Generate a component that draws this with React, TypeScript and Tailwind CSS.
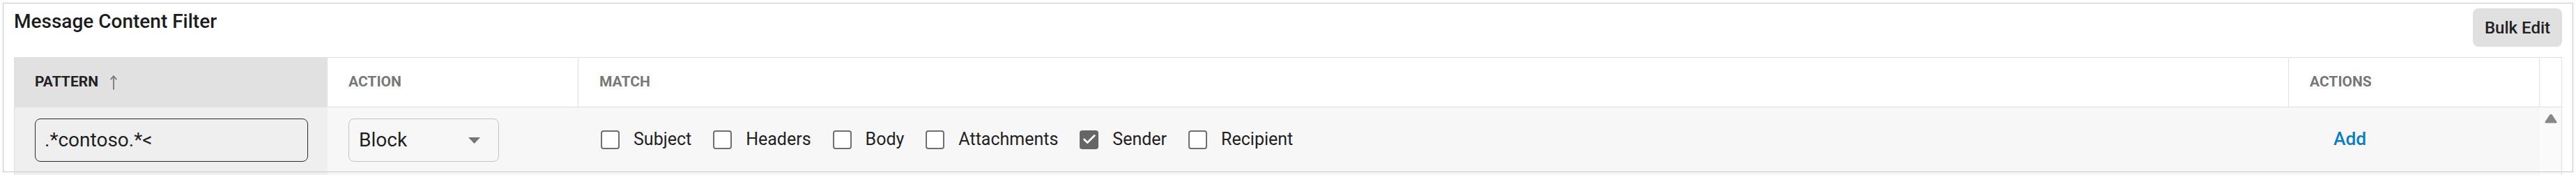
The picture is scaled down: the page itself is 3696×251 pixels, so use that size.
import { Check } from 'lucide-react';

const matchFields = [
  { label: 'Subject', checked: false },
  { label: 'Headers', checked: false },
  { label: 'Body', checked: false },
  { label: 'Attachments', checked: false },
  { label: 'Sender', checked: true },
  { label: 'Recipient', checked: false },
];

function SortArrow() {
  return (
    <svg width="10" height="22" viewBox="0 0 10 22" className="block">
      <path d="M5 21V2.5M1.2 6.6L5 2.2l3.8 4.4" fill="none" stroke="#7a7a7a" strokeWidth="1.8" strokeLinecap="round" strokeLinejoin="round" />
    </svg>
  );
}

function Box({ checked }: { checked: boolean }) {
  if (checked) {
    return (
      <span className="w-[27px] h-[27px] rounded-[4px] bg-[#666666] flex items-center justify-center shrink-0">
        <Check size={22} color="#ffffff" strokeWidth={3} />
      </span>
    );
  }
  return <span className="w-[27px] h-[27px] rounded-[4px] border-[2.5px] border-[#6f6f6f] bg-white shrink-0" />;
}

export default function App() {
  return (
    <div className="w-[3696px] h-[251px] bg-white overflow-hidden font-['Roboto',sans-serif]">
      <div className="mx-[5px] mt-[5px] h-[241px] outline-1 outline-[#c8c8c8] px-[15px] pt-[7px]">
        {/* Title + bulk edit */}
        <div className="flex items-start justify-between mb-[15px]">
          <h1 className="text-[28px] leading-[38px] font-medium text-[#1c1c1c]">Message Content Filter</h1>
          <button className="h-[55px] w-[128px] rounded-[8px] bg-[#e0e0e0] text-[24px] font-medium text-[#222222]">
            Bulk Edit
          </button>
        </div>

        {/* Table */}
        <div className="border border-[#e0e0e0] border-b-0">
          <div className="grid grid-cols-[449px_360px_1fr_360px_31px] h-[71px] border-b border-[#e0e0e0] text-[21px] font-bold">
            <div className="bg-[#e1e1e1] flex items-center gap-[17px] pl-[29px] text-[#222222]">
              PATTERN
              <SortArrow />
            </div>
            <div className="flex items-center pl-[30px] text-[#777777] border-r border-[#e0e0e0]">ACTION</div>
            <div className="flex items-center pl-[30px] text-[#777777] border-r border-[#e0e0e0]">MATCH</div>
            <div className="flex items-center pl-[30px] text-[#777777] border-r border-[#e0e0e0]">ACTIONS</div>
            <div />
          </div>

          <div className="grid grid-cols-[449px_360px_1fr_360px_31px] h-[97px]">
            <div className="bg-[#efefef] pl-[29px] pt-[16px]">
              <div className="w-[392px] h-[62px] rounded-[8px] border-[1.5px] border-[#2a2a2a] flex items-center pl-[13px] text-[28px] text-[#1f1f1f]">
                .*contoso.*&lt;
              </div>
            </div>
            <div className="bg-[#f7f7f7] pl-[30px] pt-[16px]">
              <div className="w-[216px] h-[62px] rounded-[8px] border border-[#c4c4c4] flex items-center justify-between pl-[14px] pr-[26px] text-[28px] text-[#1f1f1f]">
                Block
                <svg width="17" height="9" viewBox="0 0 17 9">
                  <path d="M0 0h17L8.5 9z" fill="#757575" />
                </svg>
              </div>
            </div>
            <div className="bg-[#f7f7f7] pl-[32px] pt-[15px]">
              <div className="h-[62px] flex items-center gap-[31px] text-[25px] text-[#222222]">
                {matchFields.map(f => (
                  <label key={f.label} className="flex items-center gap-[20px]">
                    <Box checked={f.checked} />
                    {f.label}
                  </label>
                ))}
              </div>
            </div>
            <div className="bg-[#f7f7f7] pl-[64px] pt-[15px]">
              <div className="h-[62px] flex items-center text-[26.4px] font-medium text-[#0b7dc3]">Add</div>
            </div>
            <div className="bg-[#fafafa] pt-[9px] pl-[7px]">
              <svg width="18" height="14" viewBox="0 0 18 14">
                <path d="M7.3 1.6a2 2 0 0 1 3.4 0l6.6 10a1.3 1.3 0 0 1-1.1 2H1.8a1.3 1.3 0 0 1-1.1-2z" fill="#888888" />
              </svg>
            </div>
          </div>
        </div>
      </div>
    </div>
  );
}
